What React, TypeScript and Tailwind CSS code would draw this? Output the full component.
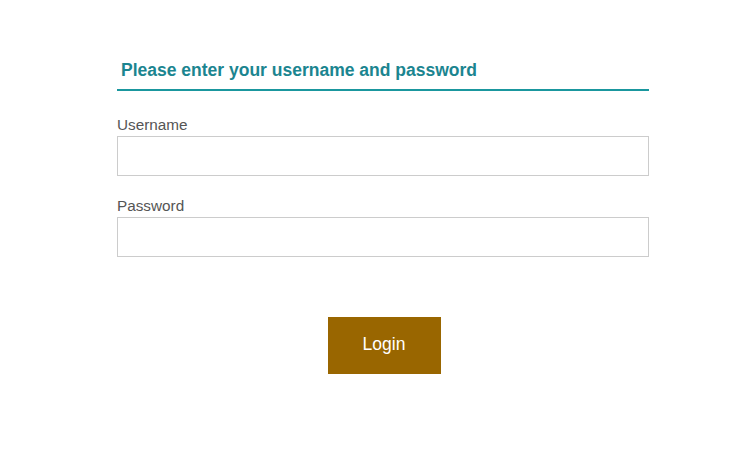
export default function App() {
  return (
    <div className="w-[749px] h-[465px] bg-white" style={{ fontFamily: '"Liberation Sans", Arial, sans-serif' }}>
      <div className="ml-[117px] w-[532px] pt-[59px] flex flex-col">
        <div className="pl-[4px] pb-[8px] border-b-2 border-[#1a979e]">
          <h1 className="text-[17.5px] leading-[22px] font-bold text-[#1b8590]">Please enter your username and password</h1>
        </div>
        <label className="mt-[25px] text-[15.3px] leading-[18px] text-[#555555]">Username</label>
        <input type="text" className="mt-[2px] h-[40px] w-full border border-[#cccccc] bg-white outline-none" />
        <label className="mt-[21px] text-[15.3px] leading-[18px] text-[#555555]">Password</label>
        <input type="password" className="mt-[2px] h-[40px] w-full border border-[#cccccc] bg-white outline-none" />
        <div className="mt-[60px] flex justify-center pl-[2px]">
          <button className="w-[113px] h-[57px] pb-[3px] bg-[#996600] text-white text-[17.5px]">Login</button>
        </div>
      </div>
    </div>
  );
}
